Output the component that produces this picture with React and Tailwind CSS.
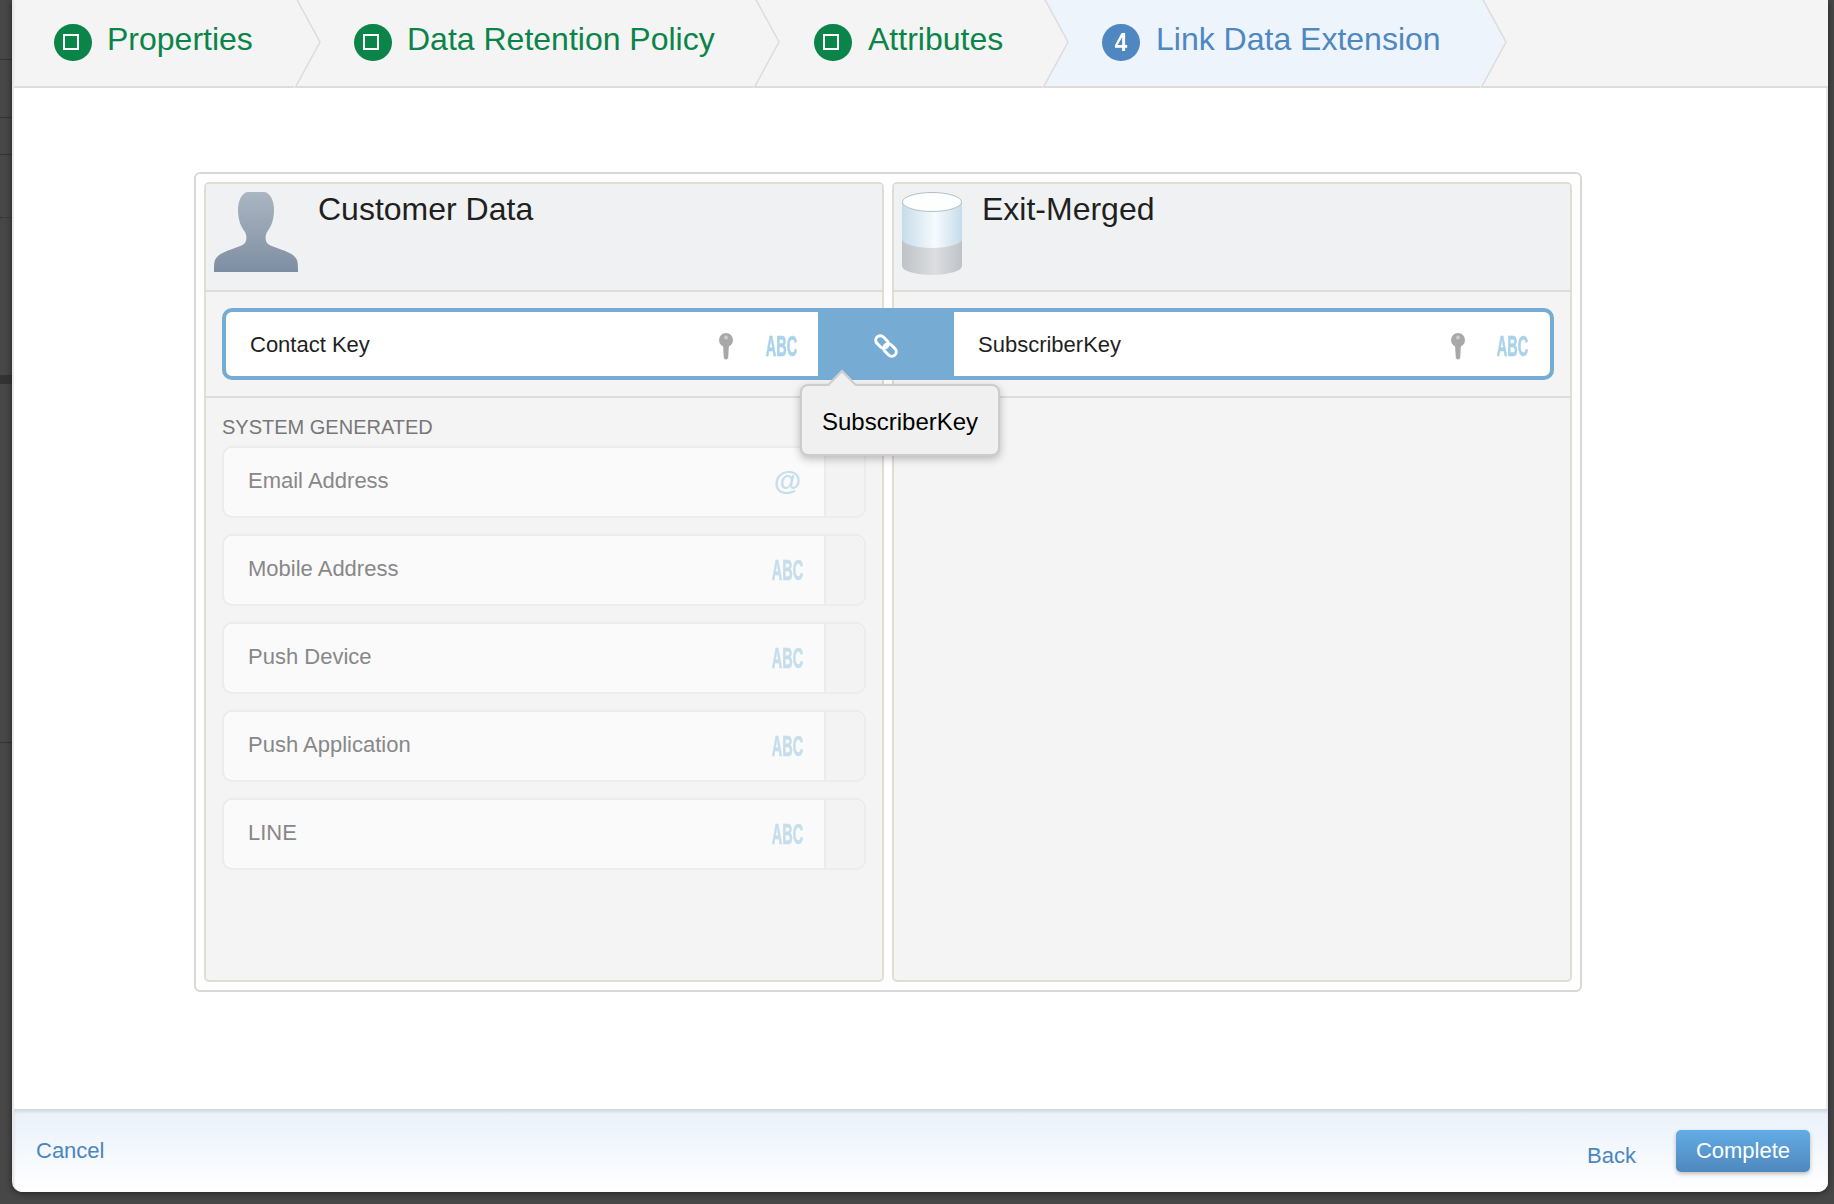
import React from 'react';

const steps = [
  { label: 'Properties', width: 'w-[280px]', pad: 'pl-[39px]', gap: 'gap-[15px]' },
  { label: 'Data Retention Policy', width: 'w-[459px]', pad: 'pl-[59px]', gap: 'gap-[15px]' },
  { label: 'Attributes', width: 'w-[289px]', pad: 'pl-[60px]', gap: 'gap-[16px]' },
  { label: 'Link Data Extension', width: 'w-[438px]', pad: 'pl-[59px]', gap: 'gap-[16px]', active: true },
];

const systemFields = ['Email Address', 'Mobile Address', 'Push Device', 'Push Application', 'LINE'];

function Chevron({ active }) {
  return (
    <svg className="absolute top-0 left-full z-10 -ml-[1px]" width="28" height="88" viewBox="0 0 28 88">
      <path d="M2.6 -1 L26 42 L1 88 L0 88 L0 -1 Z" fill={active ? '#edf4fb' : '#f4f4f4'} />
      <path d="M2.6 -1 L26 42 L1 88" fill="none" stroke="#dcdcdc" strokeWidth="1.5" />
    </svg>
  );
}

function Step({ step }) {
  const bg = step.active ? 'bg-[#edf4fb]' : 'bg-[#f4f4f4]';
  return (
    <div className={`relative flex h-[84px] items-center ${step.gap} ${step.width} ${step.pad} ${bg}`}>
      <div
        className={`flex h-[37px] w-[38px] items-center justify-center rounded-full ${
          step.active ? 'bg-[#4f88c0]' : 'bg-[#0a8449]'
        }`}
      >
        {step.active ? (
          <span className="scale-x-90 text-[25px] leading-none font-bold text-white">4</span>
        ) : (
          <div className="mr-[5px] h-[16px] w-[16px] border-[2.5px] border-white" />
        )}
      </div>
      <span
        className={`mb-[7px] text-[32px] leading-none whitespace-nowrap ${
          step.active ? 'text-[#4f88c0]' : 'text-[#0a8449]'
        }`}
      >
        {step.label}
      </span>
      <Chevron active={step.active} />
    </div>
  );
}

function Abc({ color }) {
  return (
    <div className="flex h-[24px] w-[31px] items-center justify-center">
      <span
        className={`scale-x-50 text-[29px] leading-none font-bold whitespace-nowrap blur-[0.4px] [-webkit-text-stroke:0.7px_currentColor] ${color}`}
      >
        ABC
      </span>
    </div>
  );
}

function KeyIcon() {
  return (
    <svg className="blur-[0.5px]" width="14" height="27" viewBox="0 0 14 27">
      <ellipse cx="7" cy="7" rx="7" ry="7" fill="#a8a8a8" />
      <circle cx="7" cy="4.5" r="2" fill="#cdcdcd" />
      <path d="M4 11 L10 11 L9.2 25 Q7 28 4.8 25 Z" fill="#a8a8a8" />
    </svg>
  );
}

function ChainIcon() {
  return (
    <svg width="26" height="26" viewBox="0 0 26 26" fill="none" stroke="#fff" strokeWidth="3">
      <rect x="2" y="4.5" width="14" height="9" rx="4.5" transform="rotate(45 9 9)" />
      <rect x="10" y="12.5" width="14" height="9" rx="4.5" transform="rotate(45 17 17)" />
    </svg>
  );
}

function Silhouette() {
  return (
    <svg width="84" height="80" viewBox="0 0 84 80">
      <defs>
        <linearGradient id="person" x1="0" y1="0" x2="0" y2="1">
          <stop offset="0" stopColor="#abb6c2" />
          <stop offset="1" stopColor="#7e8ea2" />
        </linearGradient>
      </defs>
      <path
        d="M33 0 L51 0 C57 2 60 9 60 18 C60 28 57 35 53 40 C51 44 51 49 54 52 C60 56 76 59 81 65 C84 68 84 72 84 80 L0 80 C0 72 0 68 3 65 C8 59 24 56 30 52 C33 49 33 44 31 40 C27 35 24 28 24 18 C24 9 27 2 33 0 Z"
        fill="url(#person)"
      />
    </svg>
  );
}

function Cylinder() {
  return (
    <svg width="60" height="83" viewBox="0 0 60 83">
      <defs>
        <linearGradient id="glass" x1="0" y1="0" x2="1" y2="0">
          <stop offset="0" stopColor="#c6dcea" />
          <stop offset="0.55" stopColor="#f6fbfd" />
          <stop offset="1" stopColor="#c6dcea" />
        </linearGradient>
        <linearGradient id="base" x1="0" y1="0" x2="1" y2="0">
          <stop offset="0" stopColor="#bfc3c7" />
          <stop offset="0.55" stopColor="#dcdee0" />
          <stop offset="1" stopColor="#bfc3c7" />
        </linearGradient>
      </defs>
      <path d="M0 10 V74 A30 9 0 0 0 60 74 V10 Z" fill="url(#base)" />
      <path d="M0 10 V47 A30 9 0 0 0 60 47 V10 Z" fill="url(#glass)" />
      <ellipse cx="30" cy="10" rx="29.5" ry="9.5" fill="#fdfefe" stroke="#b4bdc3" strokeWidth="1" />
    </svg>
  );
}

function FieldRow({ name }) {
  return (
    <div className="flex h-[72px] overflow-hidden rounded-[10px] border-2 border-[#ececec] bg-[#fafafa]">
      <div className="flex flex-1 items-center justify-between pr-[21px] pl-[24px]">
        <span className="mb-[3px] text-[22px] leading-none text-[#888888]">{name}</span>
        {name === 'Email Address' ? (
          <span className="mb-[2px] w-[31px] text-center text-[28px] leading-none font-bold text-[#c6deeb]">@</span>
        ) : (
          <Abc color="text-[#c6deeb]" />
        )}
      </div>
      <div className="w-[40px] border-l-2 border-[#ececec] bg-[#f3f3f3]" />
    </div>
  );
}

function PanelHeader({ icon, title }) {
  return (
    <div className="flex h-[108px] gap-[20px] border-b-2 border-[#e0ddd3] bg-[#f0f1f3] pt-2 pl-2">
      {icon}
      <h2 className="mt-[1px] text-[32px] leading-none font-normal text-[#1f1f1f]">{title}</h2>
    </div>
  );
}

function LeftStrip() {
  return (
    <div className="flex w-3 shrink-0 flex-col">
      <div className="h-[60px] border-b border-[#333333]" />
      <div className="h-[58px] border-b border-[#333333]" />
      <div className="h-[37px] border-b border-[#333333]" />
      <div className="h-[63px] border-b border-dotted border-[#2f2f2f]" />
      <div className="mt-[157px] h-[9px] bg-[#333333]" />
      <div className="h-[359px] border-b border-[#333333]" />
    </div>
  );
}

export default function App() {
  return (
    <div className="flex h-[1204px] w-[1834px] overflow-hidden bg-[#474747] pb-3 font-['Liberation_Sans',Arial,sans-serif]">
      <LeftStrip />
      <div className="flex w-[1816px] flex-col overflow-hidden rounded-b-[10px] border-l-[2px] border-[#e8e8e8] bg-white shadow-[0_1px_6px_#222222]">
        <div className="flex h-[88px] shrink-0 border-b-2 border-[#dcdcdc] bg-[#f4f4f4] pb-[2px]">
          <div className="flex rounded-bl-[6px] border-l border-[#eeeeee]">
            {steps.map((step) => (
              <Step key={step.label} step={step} />
            ))}
          </div>
        </div>

        <main className="flex-1 border-r-[2px] border-[#e8e8e8] bg-white pt-[84px] pl-[180px]">
          <div className="relative flex h-[820px] w-[1388px] gap-[8px] rounded-[6px] border-2 border-[#d8d8d8] p-2">
            <section className="flex w-[680px] flex-col overflow-hidden rounded-[5px] border-2 border-[#e0ddd3] bg-[#f4f4f4]">
              <PanelHeader icon={<Silhouette />} title="Customer Data" />
              <div className="h-[106px] shrink-0 border-b-2 border-[#dcdcdc]" />
              <div className="pt-[19px] pr-[16px] pl-[16px]">
                <h3 className="mb-[9px] text-[20px] leading-none font-normal text-[#777777]">SYSTEM GENERATED</h3>
                <div className="flex flex-col gap-[16px]">
                  {systemFields.map((name) => (
                    <FieldRow key={name} name={name} />
                  ))}
                </div>
              </div>
            </section>

            <section className="flex w-[680px] flex-col overflow-hidden rounded-[5px] border-2 border-[#e0ddd3] bg-[#f4f4f4]">
              <PanelHeader icon={<Cylinder />} title="Exit-Merged" />
              <div className="h-[106px] shrink-0 border-b-2 border-[#dcdcdc]" />
            </section>

            {/* linked pair sits across both panels */}
            <div className="absolute top-[134px] left-[26px] flex h-[72px] w-[1332px] overflow-hidden rounded-[10px] border-4 border-[#76acd3] bg-white">
              <div className="flex w-[592px] items-center pr-[21px] pl-[24px]">
                <span className="mt-[2px] flex-1 text-[22px] leading-none text-[#1f1f1f]">Contact Key</span>
                <div className="mt-[5px] flex items-center gap-[33px]">
                  <KeyIcon />
                  <Abc color="text-[#a9d3e8]" />
                </div>
              </div>
              <div className="flex w-[136px] items-center justify-center bg-[#76acd3] pt-[4px]">
                <ChainIcon />
              </div>
              <div className="flex flex-1 items-center pr-[22px] pl-[24px]">
                <span className="mt-[2px] flex-1 text-[22px] leading-none text-[#1f1f1f]">SubscriberKey</span>
                <div className="mt-[5px] flex items-center gap-[32px]">
                  <KeyIcon />
                  <Abc color="text-[#a9d3e8]" />
                </div>
              </div>
            </div>

            <div className="absolute top-[210px] left-[604px] flex h-[72px] w-[200px] items-center rounded-[8px] border-2 border-[#cccccc] bg-[#f0f0f0] pl-[20px] shadow-[0_3px_8px_rgba(0,0,0,0.25)]">
              <div className="absolute -top-[12px] left-[30px] h-[20px] w-[20px] rotate-45 border-t-2 border-l-2 border-[#cccccc] bg-[#f0f0f0]" />
              <span className="relative mt-[4px] text-[24px] leading-none text-black">SubscriberKey</span>
            </div>
          </div>
        </main>

        <footer className="flex h-[83px] shrink-0 justify-between bg-gradient-to-b from-[#e9f1fa] to-white pr-[18px] pl-[22px] shadow-[inset_0_3px_3px_rgba(0,0,0,0.1)]">
          <a className="mt-[31px] text-[22px] leading-none text-[#4a86c0]">Cancel</a>
          <div className="flex items-start gap-[40px] pt-[21px]">
            <a className="mt-[15px] text-[22px] leading-none text-[#4a86c0]">Back</a>
            <button className="flex h-[42px] w-[134px] items-center justify-center rounded-[5px] bg-gradient-to-b from-[#62ace6] to-[#4f88bd] text-[22px] leading-none text-white shadow-[0_2px_4px_rgba(0,0,0,0.25)]">
              Complete
            </button>
          </div>
        </footer>
      </div>
    </div>
  );
}
